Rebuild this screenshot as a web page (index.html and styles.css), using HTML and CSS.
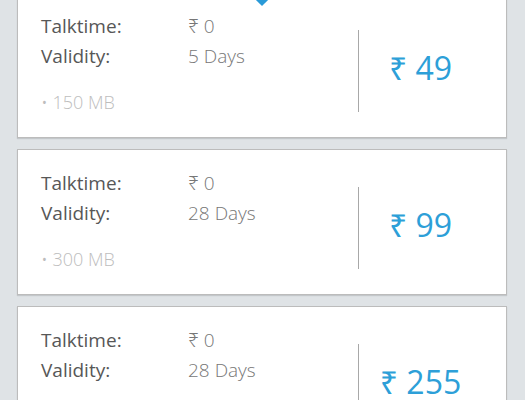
FILE: index.html
```html
<!DOCTYPE html>
<html>
<head>
<meta charset="utf-8">
<link rel="stylesheet" href="styles.css">
</head>
<body>
<div class="list">
  <div class="card">
    <span class="pointer"></span>
    <div class="info">
      <div class="row"><span class="label">Talktime:</span><span class="value">₹ 0</span></div>
      <div class="row"><span class="label">Validity:</span><span class="value">5 Days</span></div>
      <div class="data">• 150 MB</div>
    </div>
    <div class="price-col"><span class="price">₹ 49</span></div>
  </div>
  <div class="card">
    <div class="info">
      <div class="row"><span class="label">Talktime:</span><span class="value">₹ 0</span></div>
      <div class="row"><span class="label">Validity:</span><span class="value">28 Days</span></div>
      <div class="data">• 300 MB</div>
    </div>
    <div class="price-col"><span class="price">₹ 99</span></div>
  </div>
  <div class="card">
    <div class="info">
      <div class="row"><span class="label">Talktime:</span><span class="value">₹ 0</span></div>
      <div class="row"><span class="label">Validity:</span><span class="value">28 Days</span></div>
    </div>
    <div class="price-col"><span class="price">₹ 255</span></div>
  </div>
</div>
</body>
</html>
```
FILE: styles.css
```css
html, body {
  margin: 0;
  padding: 0;
}
body {
  background: #dfe3e6;
  font-family: "Open Sans", "Noto Sans", "DejaVu Sans", sans-serif;
  overflow: hidden;
  height: 400px;
}
.list {
  display: flex;
  flex-direction: column;
  gap: 11px;
  padding: 0 18px 0 17px;
  margin-top: -8px;
}
.card {
  position: relative;
  box-sizing: border-box;
  height: 146px;
  flex: none;
  background: #fff;
  border: 1px solid #bcbcbc;
  box-shadow: 0 1px 1px rgba(0,0,0,0.12);
  display: flex;
}
.pointer {
  position: absolute;
  left: 239px;
  top: 1px;
  width: 10px;
  height: 10px;
  background: #2a9ad8;
  transform: rotate(45deg);
}
.info {
  width: 340px;
  box-sizing: border-box;
  padding: 18px 0 0 23px;
}
.row {
  display: flex;
  height: 30px;
  line-height: 30px;
  font-size: 19px;
}
.label {
  width: 147px;
  color: #575757;
}
.value {
  color: #777;
  font-weight: 300;
}
.data {
  margin-top: 16px;
  line-height: 30px;
  font-size: 18px;
  font-weight: 300;
  color: #bdbdbd;
}
.price-col {
  margin: 37px 0 25px;
  padding-bottom: 7px;
  box-sizing: border-box;
  border-left: 1px solid #a8a8a8;
  width: 124px;
  display: flex;
  align-items: center;
  justify-content: center;
}
.price {
  font-size: 32px;
  line-height: 40px;
  color: #2d9fd8;
  font-weight: 400;
}
```
